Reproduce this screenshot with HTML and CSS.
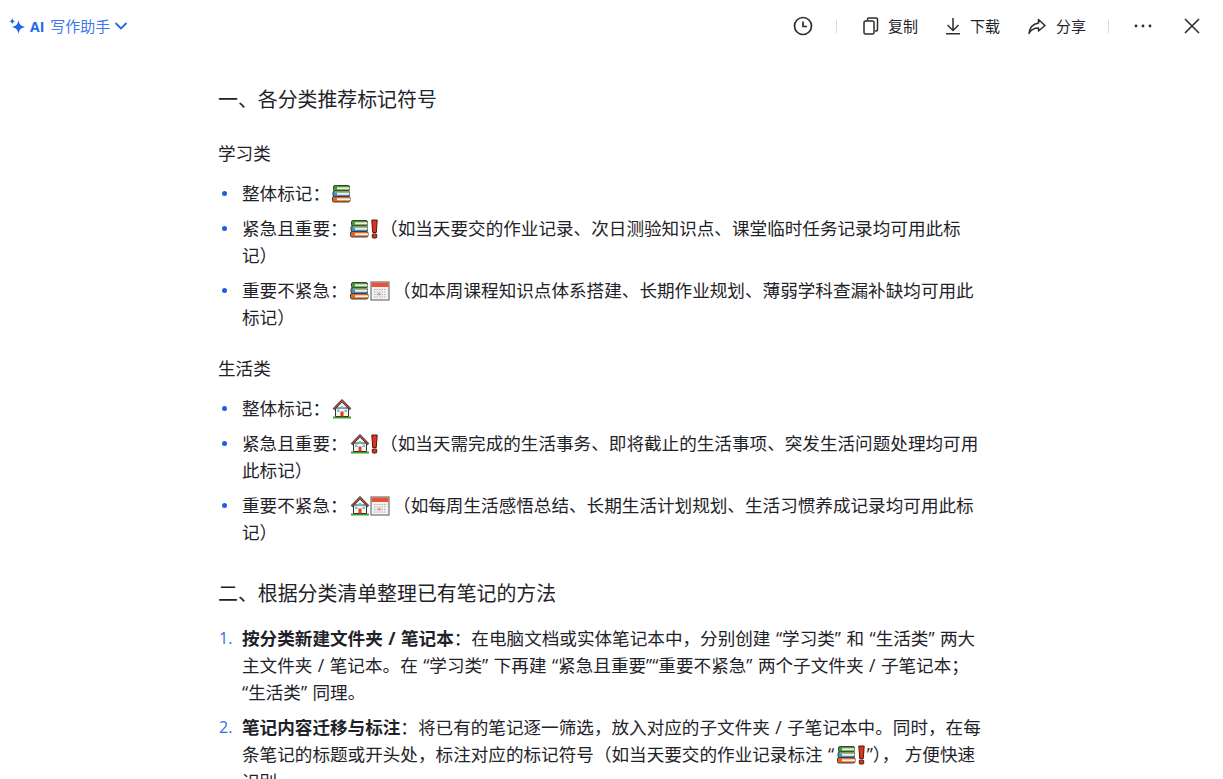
FILE: index.html
```html
<!DOCTYPE html>
<html lang="zh">
<head>
<meta charset="utf-8">
<title>AI 写作助手</title>
<link rel="stylesheet" href="styles.css">
</head>
<body>
<svg class="defs" width="0" height="0" aria-hidden="true">
  <defs>
    <symbol id="books" viewBox="0 0 20 20">
      <rect x="1.500" y="1.500" width="16" height="5.500" rx="1.500" fill="#3f9e33" stroke="#3b3f3b" stroke-width="1"/>
      <path d="M5 3.300h12.500v2H5z" fill="#f2f0dc"/>
      <rect x="1" y="7" width="16.500" height="5.500" rx="1.500" fill="#3d8fd1" stroke="#3b3f3b" stroke-width="1"/>
      <path d="M5 8.800h12.500v2H5z" fill="#f1f1ea"/>
      <path d="M3 7.500h14v1H3z" fill="#e0c341"/>
      <rect x=".5" y="12.500" width="17.500" height="5.500" rx="1.500" fill="#e8641b" stroke="#3b3f3b" stroke-width="1"/>
      <path d="M5 14.300h13v2H5z" fill="#f5f3ee"/>
    </symbol>
    <symbol id="alert" viewBox="0 0 10 20">
      <path d="M1.800 1h5.400L6.300 13.500H2.700z" fill="#e0331c" stroke="#4a1a12" stroke-width="1"/>
      <rect x="2.300" y="15" width="4.400" height="4" rx=".8" fill="#e0331c" stroke="#4a1a12" stroke-width="1"/>
    </symbol>
    <symbol id="calendar" viewBox="0 0 20 20">
      <rect x="1" y="1" width="18" height="18" fill="#f2f2f2" stroke="#6f7276" stroke-width="1.200"/>
      <rect x="1.600" y="1.600" width="16.800" height="4.400" fill="#e8503a"/>
      <path d="M4 8.500h12M4 11h12M4 13.500h12M4 16h12" stroke="#b0b0b0" stroke-width="1" stroke-dasharray="1.500 1"/>
      <path d="M8 12h2.500v2.500H8z" fill="#e89a90"/>
    </symbol>
    <symbol id="house" viewBox="0 0 20 20">
      <path d="M1 17.500h18v2H1z" fill="#37a02f"/>
      <path d="M3.500 9h13v8.500h-13z" fill="#fbf6ea" stroke="#333" stroke-width="1"/>
      <path d="M10 .5 1.200 9.500l1.300 1.200L10 3.200l7.500 7.500 1.300-1.200z" fill="#c2473a" stroke="#333" stroke-width="1"/>
      <path d="M8.500 12.500h3v5h-3z" fill="#e5361f"/>
      <path d="M5 10.500h2.500V13H5zM12.500 10.500H15V13h-2.500zM8.800 7h2.400v2.400H8.800z" fill="#55cdf0"/>
    </symbol>
  </defs>
</svg>

<header class="topbar">
  <div class="assistant">
    <svg class="spark" width="16" height="16" viewBox="0 0 16 16"><path d="M9.500 2C10.200 6.300 11.700 8 16 9 11.700 10 10.200 11.700 9.500 16 8.800 11.700 7.300 10 3 9 7.300 8 8.800 6.300 9.500 2z" fill="#1f66f0"/><path d="M3.300 0C3.600 2 4.500 3 6.600 3.300 4.500 3.600 3.600 4.600 3.300 6.600 3 4.600 2.100 3.600 0 3.300 2.100 3 3 2 3.300 0z" fill="#1f66f0"/></svg>
    <span class="ai">AI</span>
    <span class="assistant-name">写作助手</span>
    <svg class="chevron" width="12" height="8" viewBox="0 0 12 8"><path d="M1 1.500 6 6.500l5-5" fill="none" stroke="#1f66f0" stroke-width="1.800" stroke-linecap="round"/></svg>
  </div>
  <div class="actions">
    <svg class="ic clock" width="20" height="20" viewBox="0 0 20 20"><circle cx="10" cy="10" r="8.500" fill="none" stroke="#2b2d31" stroke-width="1.700"/><path d="M10 5.500V10.500H14" fill="none" stroke="#2b2d31" stroke-width="1.700"/></svg>
    <span class="divider d1"></span>
    <div class="action copy">
      <svg width="16" height="18" viewBox="0 0 16 18"><rect x="1" y="4" width="10" height="13" rx="1.500" fill="none" stroke="#2b2d31" stroke-width="1.500"/><path d="M4.500 3.500V2.200C4.500 1.500 5 1 5.700 1h7.600c.7 0 1.200.5 1.200 1.200v10.600c0 .7-.5 1.200-1.200 1.200H12" fill="none" stroke="#2b2d31" stroke-width="1.500"/></svg>
      <span>复制</span>
    </div>
    <div class="action download">
      <svg width="16" height="18" viewBox="0 0 16 18"><path d="M8 1v12M2.500 8 8 13.500 13.500 8M1 16.800h14" fill="none" stroke="#2b2d31" stroke-width="1.500"/></svg>
      <span>下载</span>
    </div>
    <div class="action share">
      <svg width="18" height="17" viewBox="0 0 18 17"><path d="M10.500 1.500 17 7.500l-6.500 5.500V10C6 10 3 11.500 1 15.500 1.500 9.500 5 6 10.500 5z" fill="none" stroke="#2b2d31" stroke-width="1.500" stroke-linejoin="round"/></svg>
      <span>分享</span>
    </div>
    <span class="divider d2"></span>
    <svg class="ic more" width="18" height="4" viewBox="0 0 18 4"><circle cx="2" cy="2" r="1.400" fill="#2b2d31"/><circle cx="9" cy="2" r="1.400" fill="#2b2d31"/><circle cx="16" cy="2" r="1.400" fill="#2b2d31"/></svg>
    <svg class="ic close" width="16" height="16" viewBox="0 0 16 16"><path d="M1 1l14 14M15 1 1 15" fill="none" stroke="#2b2d31" stroke-width="1.600"/></svg>
  </div>
</header>

<main class="doc">
  <h2 class="section first">一、各分类推荐标记符号</h2>
  <p class="category first-cat">学习类</p>
  <ul class="bullets">
    <li>整体标记：<svg class="emoji" viewBox="0 0 20 20"><use href="#books"/></svg></li>
    <li>紧急且重要：<svg class="emoji" viewBox="0 0 20 20"><use href="#books"/></svg><svg class="emoji alert" viewBox="0 0 10 20"><use href="#alert"/></svg>（如当天要交的作业记录、次日测验知识点、课堂临时任务记录均可用此标记）</li>
    <li>重要不紧急：<svg class="emoji" viewBox="0 0 20 20"><use href="#books"/></svg><svg class="emoji cal" viewBox="0 0 20 20"><use href="#calendar"/></svg>（如本周课程知识点体系搭建、长期作业规划、薄弱学科查漏补缺均可用此标记）</li>
  </ul>
  <p class="category">生活类</p>
  <ul class="bullets">
    <li>整体标记：<svg class="emoji" viewBox="0 0 20 20"><use href="#house"/></svg></li>
    <li>紧急且重要：<svg class="emoji" viewBox="0 0 20 20"><use href="#house"/></svg><svg class="emoji alert" viewBox="0 0 10 20"><use href="#alert"/></svg>（如当天需完成的生活事务、即将截止的生活事项、突发生活问题处理均可用此标记）</li>
    <li>重要不紧急：<svg class="emoji" viewBox="0 0 20 20"><use href="#house"/></svg><svg class="emoji cal" viewBox="0 0 20 20"><use href="#calendar"/></svg>（如每周生活感悟总结、长期生活计划规划、生活习惯养成记录均可用此标记）</li>
  </ul>
  <h2 class="section">二、根据分类清单整理已有笔记的方法</h2>
  <ol class="steps">
    <li><strong>按分类新建文件夹 / 笔记本</strong>：在电脑文档或实体笔记本中，分别创建 “学习类” 和 “生活类” 两大主文件夹 / 笔记本。在 “学习类” 下再建 “紧急且重要”“重要不紧急” 两个子文件夹 / 子笔记本；“生活类” 同理。</li>
    <li><strong>笔记内容迁移与标注</strong>：将已有的笔记逐一筛选，放入对应的子文件夹 / 子笔记本中。同时，在每条笔记的标题或开头处，标注对应的标记符号（如当天要交的作业记录标注 “<svg class="emoji" viewBox="0 0 20 20"><use href="#books"/></svg><svg class="emoji alert" viewBox="0 0 10 20"><use href="#alert"/></svg>”）， 方便快速识别。</li>
  </ol>
</main>
</body>
</html>
```

FILE: styles.css
```css
* { box-sizing: border-box; }
html, body { margin: 0; height: 779px; overflow: hidden; background: #fff; }
body {
  font-family: "Open Sans", "Noto Sans CJK SC", sans-serif;
  color: #1f2329;
}
.defs { position: absolute; }
.topbar {
  height: 52px;
  display: flex;
  justify-content: space-between;
  align-items: center;
  padding: 0 23px 0 9px;
}
.assistant { display: flex; align-items: center; color: #3f78ee; font-size: 15px; }
.spark { margin-right: 5px; }
.ai { font-weight: 700; font-size: 14px; color: #1f66f0; margin-right: 6px; }
.assistant-name { width: 60px; white-space: nowrap; padding-bottom: 2px; }
.chevron { margin-left: 5px; }
.actions { display: flex; align-items: center; font-size: 15px; }
.action { display: flex; align-items: center; gap: 9px; }
.action span { padding-bottom: 2px; }
.share { gap: 10px; }
.divider { width: 1px; height: 13px; background: #d8dadd; }
.clock { margin-right: 23px; }
.d1 { margin-right: 26px; }
.copy { margin-right: 27px; }
.download { margin-right: 28px; }
.share { margin-right: 22px; }
.d2 { margin-right: 25px; }
.more { margin-right: 32px; }
.doc { width: 764px; margin-left: 218px; }
.section { margin: 0; font-size: 19.9px; font-weight: 400; line-height: 30px; }
.section.first { margin-top: 33px; }
.bullets + .section { margin-top: 33px; }
.category { margin: 24px 0 0; font-size: 17.6px; line-height: 27px; }
.category.first-cat { margin-top: 25px; }
.bullets, .steps { margin: 13px 0 0; padding: 0 0 0 24px; font-size: 17.6px; line-height: 27px; }
.steps { margin-top: 16px; list-style: none; counter-reset: step; word-spacing: .9px; }
.bullets { list-style: none; }
.bullets li, .steps li { position: relative; }
.bullets li::before {
  content: "";
  position: absolute;
  left: -20px;
  top: 11px;
  width: 5px;
  height: 5px;
  border-radius: 50%;
  background: #1f5fe0;
}
.steps li { counter-increment: step; }
.steps li::before {
  content: counter(step) ".";
  position: absolute;
  left: -23px;
  top: 0;
  color: #2f6be8;
  font-size: 16px;
}
.bullets li + li, .steps li + li { margin-top: 8px; }
.emoji { width: 20px; height: 20px; vertical-align: -4px; margin-left: 2.5px; }
.emoji + .emoji { margin-left: 0; }
.alert { width: 10px; }
.cal { margin-right: 3px; }
strong { font-weight: 700; }
```
